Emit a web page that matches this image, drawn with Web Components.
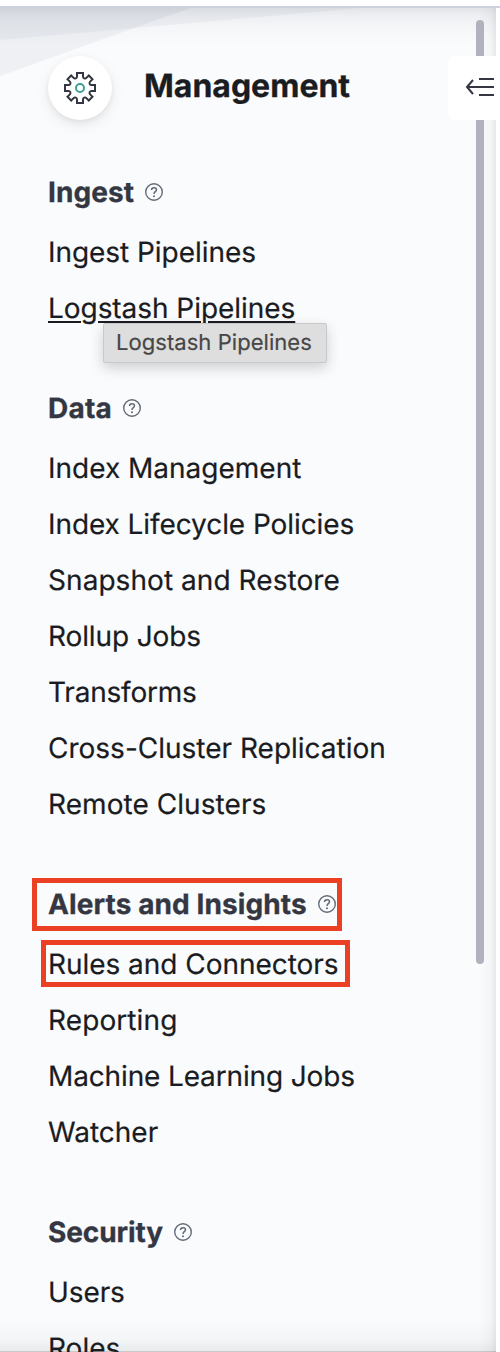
<!DOCTYPE html>
<html lang="en">
<head>
<meta charset="utf-8">
<title>Management</title>
<style>
html, body { margin: 0; height: 1352px; overflow: hidden; background: #fff; }
body { font-family: Inter, "Liberation Sans", sans-serif; color: #1a1c21; text-rendering: geometricPrecision; }
</style>
</head>
<body>
<management-nav>
  <nav-header slot="header">Management</nav-header>
  <nav-group label="Ingest" style="--head-tracking:.1px">
    <nav-item style="--tracking:-.05px">Ingest Pipelines</nav-item>
    <nav-item style="--tracking:-.05px" active tip="Logstash Pipelines">Logstash Pipelines</nav-item>
  </nav-group>
  <nav-group label="Data" style="--head-tracking:.2px">
    <nav-item>Index Management</nav-item>
    <nav-item style="--tracking:-.08px">Index Lifecycle Policies</nav-item>
    <nav-item style="--tracking:.06px">Snapshot and Restore</nav-item>
    <nav-item style="--tracking:-.12px">Rollup Jobs</nav-item>
    <nav-item style="--tracking:-.2px">Transforms</nav-item>
    <nav-item>Cross-Cluster Replication</nav-item>
    <nav-item style="--tracking:.06px">Remote Clusters</nav-item>
  </nav-group>
  <nav-group label="Alerts and Insights" style="--head-tracking:.1px" marked>
    <nav-item style="--tracking:-.04px" marked>Rules and Connectors</nav-item>
    <nav-item style="--tracking:.1px">Reporting</nav-item>
    <nav-item style="--tracking:-.14px">Machine Learning Jobs</nav-item>
    <nav-item>Watcher</nav-item>
  </nav-group>
  <nav-group label="Security" style="--head-tracking:-.12px">
    <nav-item style="--tracking:-.1px">Users</nav-item>
    <nav-item>Roles</nav-item>
  </nav-group>
  <collapse-button slot="collapse"></collapse-button>
</management-nav>
<script>
const define = (name, html, setup) => {
  const t = document.createElement('template');
  t.innerHTML = html;
  customElements.define(name, class extends HTMLElement {
    constructor() {
      super();
      this.attachShadow({ mode: 'open' }).append(t.content.cloneNode(true));
    }
    connectedCallback() { if (setup) setup(this, this.shadowRoot); }
  });
};

define('management-nav', `
<style>
:host { display: block; position: relative; width: 500px; height: 1352px; overflow: hidden; }
.panel { box-sizing: border-box; position: relative; width: 496px; height: 1346px; margin-top: 6px; border-top: 2px solid #cdd2de; background: #fafbfd; overflow: hidden; }
:host::before { content: ""; position: absolute; right: 0; top: 6px; width: 4px; height: 2px; background: #cdd2de; }
.art { position: absolute; left: 0; top: 0; }
.shade { position: absolute; inset: 0; background:
  linear-gradient(to bottom, rgba(60,68,84,.13), rgba(60,68,84,.07) 7px, rgba(60,68,84,.03) 18px, transparent 36px),
  linear-gradient(to top, rgba(0,0,0,.2) 0, rgba(0,0,0,.2) 1px, rgba(0,0,0,.065) 1px, rgba(0,0,0,.025) 13px, transparent 34px),
  linear-gradient(to left, rgba(0,0,0,.075), rgba(0,0,0,.025) 6px, transparent 18px); }
.content { position: relative; }
.thumb { position: absolute; right: 12px; top: 12px; width: 8px; height: 944px; border-radius: 4px; background: #b0b3bd; }
</style>
<div class="panel">
  <svg class="art" width="496" height="80" viewBox="0 8 496 80"><path d="M0 8H360L0 40Z" fill="#74809c" fill-opacity=".075"/><path d="M0 8H190L0 76Z" fill="#74809c" fill-opacity=".085"/></svg>
  <div class="shade"></div>
  <div class="content"><slot name="header"></slot><slot></slot></div>
  <div class="thumb"></div>
</div>
<slot name="collapse"></slot>`);

define('nav-header', `
<style>
:host { display: flex; align-items: center; gap: 32px; padding: 48px 0 0 48px; height: 64px; }
.badge { width: 64px; height: 64px; border-radius: 50%; background: #fff; display: grid; place-items: center; box-shadow: 0 2px 5px rgba(0,0,0,.06), 0 5px 14px rgba(0,0,0,.08); }
svg { display: block; }
h1 { margin: 0; position: relative; top: -2px; font-size: 32px; line-height: 48px; font-weight: 700; color: #1a1c21; -webkit-text-stroke: .3px currentColor; }
</style>
<span class="badge"><svg width="32" height="32" viewBox="0 0 32 32" fill="none" stroke-width="2"><path stroke="#343741" d="M13 1h6v3.500a2 2 0 0 0 3.400 1.400l2.400-2.400 3.700 3.700-2.400 2.400A2 2 0 0 0 27.500 13H31v6h-3.500a2 2 0 0 0-1.400 3.400l2.400 2.400-3.700 3.700-2.400-2.400A2 2 0 0 0 19 27.500V31h-6v-3.500a2 2 0 0 0-3.400-1.400l-2.400 2.400-3.700-3.700 2.400-2.400A2 2 0 0 0 4.500 19H1v-6h3.500a2 2 0 0 0 1.400-3.400L3.500 7.200l3.700-3.700 2.400 2.400A2 2 0 0 0 13 4.500Z"/><circle cx="16" cy="16" r="4" stroke="#3f9f97"/></svg></span>
<h1><slot></slot></h1>`);

define('help-icon', `
<style>:host { display: block; width: 18px; height: 18px; } svg { display: block; }</style>
<svg width="18" height="18" viewBox="0 0 18 18" fill="none" stroke="#656a78" stroke-width="1.4"><circle cx="9" cy="9" r="8.300"/><path stroke-width="1.5" d="M6.500 7.100C6.500 5.500 7.500 4.700 9 4.700s2.500.8 2.500 2.100c0 1.900-2.500 1.800-2.500 4.100"/><circle cx="9" cy="13.200" r="1" fill="#656a78" stroke="none"/></svg>`);

define('nav-group', `
<style>
:host { display: block; padding-top: 44px; }
.head { display: flex; align-items: center; gap: 11px; height: 56px; padding-left: 48px; position: relative; }
h2 { margin: 0; font-size: 28px; line-height: 56px; font-weight: 700; color: #343741; white-space: nowrap; letter-spacing: var(--head-tracking, 0); -webkit-text-stroke: .3px currentColor; }
.items { padding-top: 4px; }
:host([marked]) .head::after { content: ""; position: absolute; left: 32px; top: 2px; width: 300px; height: 43px; border: 5px solid #ec4024; }
</style>
<div class="head"><h2></h2><help-icon></help-icon></div>
<div class="items"><slot></slot></div>`, (el, root) => { root.querySelector('h2').textContent = el.getAttribute('label'); });

define('nav-item', `
<style>
:host { display: block; position: relative; height: 56px; padding-left: 48px; font-size: 28px; line-height: 56px; white-space: nowrap; color: #1a1c21; }
.label { letter-spacing: var(--tracking, 0); -webkit-text-stroke: .2px currentColor; }
:host([active]) .label { text-decoration: underline; text-decoration-thickness: 2px; text-underline-offset: 3px; }
:host([marked])::after { content: ""; position: absolute; left: 41px; top: 4px; width: 299px; height: 37px; border: 5px solid #ec4024; }
.tip { display: none; }
:host([tip]) .tip { display: block; box-sizing: border-box; position: absolute; z-index: 2; left: 103px; top: 43px; width: 224px; height: 40px; border: 1px solid #c9c9c9; border-radius: 2px; background: #dedede; box-shadow: 0 5px 14px rgba(0,0,0,.18); padding-left: 12px; font-size: 22px; line-height: 39px; color: #464646; letter-spacing: .05px; -webkit-text-stroke: .2px currentColor; }
</style>
<span class="label"><slot></slot></span><div class="tip"></div>`, (el, root) => { root.querySelector('.tip').textContent = el.getAttribute('tip') || ''; });

define('collapse-button', `
<style>
:host { position: absolute; left: 448px; top: 56px; width: 52px; height: 64px; border-radius: 8px 0 0 8px; background: #fff; }
svg { display: block; }
</style>
<svg width="52" height="64" fill="none" stroke="#343741" stroke-width="2"><path d="M31 23H46M19 31H46M31 39H46M25 24l-6 7 6 7"/></svg>`);
</script>
</body>
</html>
